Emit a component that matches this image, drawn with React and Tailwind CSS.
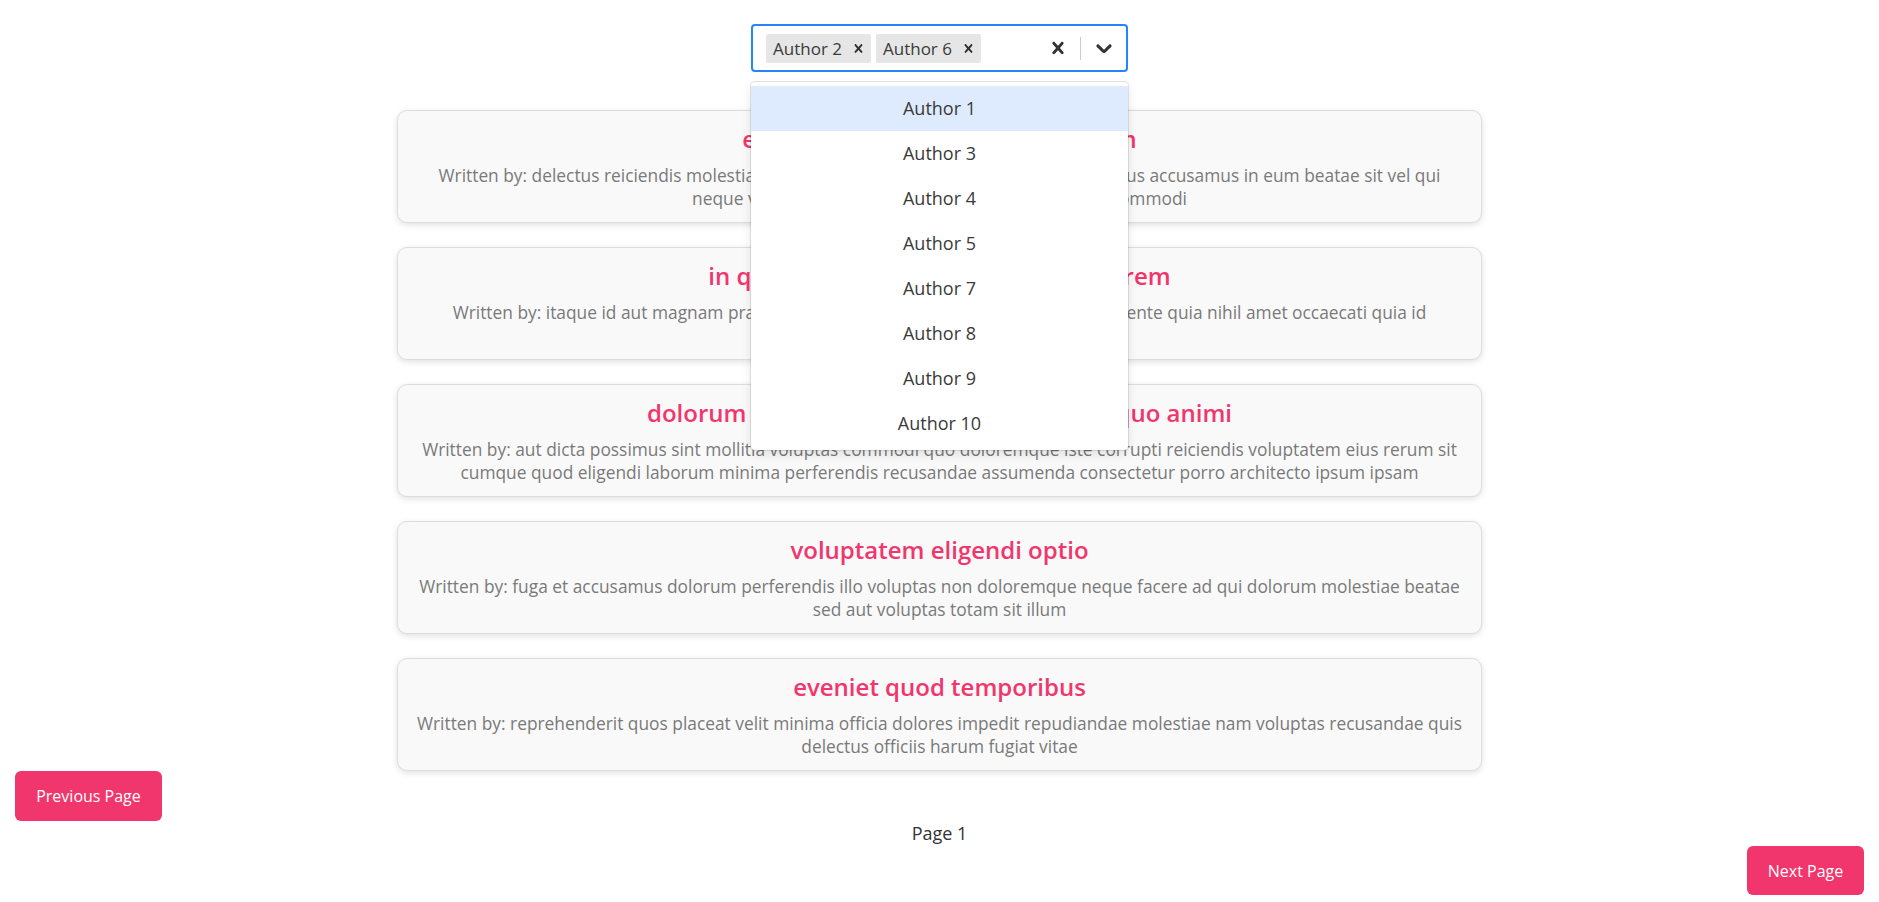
import React from "react";

const PINK = "#f1366d";

const CrossIcon = ({ size = 20 }) => (
  <svg width={size} height={size} viewBox="0 0 20 20" fill="currentColor" aria-hidden="true">
    <path d="M14.348 14.849c-0.469 0.469-1.229 0.469-1.697 0l-2.651-3.030-2.651 3.029c-0.469 0.469-1.229 0.469-1.697 0-0.469-0.469-0.469-1.229 0-1.697l2.758-3.15-2.759-3.152c-0.469-0.469-0.469-1.228 0-1.697s1.228-0.469 1.697 0l2.652 3.031 2.651-3.031c0.469-0.469 1.228-0.469 1.697 0s0.469 1.229 0 1.697l-2.758 3.152 2.758 3.15c0.469 0.469 0.469 1.229 0 1.698z" />
  </svg>
);

const ChevronIcon = ({ size = 20 }) => (
  <svg width={size} height={size} viewBox="0 0 20 20" fill="currentColor" aria-hidden="true">
    <path d="M4.516 7.548c0.436-0.446 1.043-0.481 1.576 0l3.908 3.747 3.908-3.747c0.533-0.481 1.141-0.446 1.574 0 0.436 0.445 0.408 1.197 0 1.615-0.406 0.418-4.695 4.502-4.695 4.502-0.217 0.223-0.502 0.335-0.787 0.335s-0.57-0.112-0.789-0.335c0 0-4.287-4.084-4.695-4.502s-0.436-1.17 0-1.615z" />
  </svg>
);

const posts = [
  {
    title: "et ea vero quia laudantium autem",
    body: "Written by: delectus reiciendis molestiae occaecati non minima eveniet qui voluptatibus accusamus in eum beatae sit vel qui\nneque voluptates ut commodi qui incidunt ut animi commodi",
  },
  {
    title: "in quibusdam tempore odit est dolorem",
    body: "Written by: itaque id aut magnam praesentium quia et ea odit et ea voluptas et sapiente quia nihil amet occaecati quia id\nvoluptatem incidunt ea est distinctio odio",
  },
  {
    title: "dolorum ut in voluptas mollitia et saepe quo animi",
    body: "Written by: aut dicta possimus sint mollitia voluptas commodi quo doloremque iste corrupti reiciendis voluptatem eius rerum sit\ncumque quod eligendi laborum minima perferendis recusandae assumenda consectetur porro architecto ipsum ipsam",
  },
  {
    title: "voluptatem eligendi optio",
    body: "Written by: fuga et accusamus dolorum perferendis illo voluptas non doloremque neque facere ad qui dolorum molestiae beatae\nsed aut voluptas totam sit illum",
  },
  {
    title: "eveniet quod temporibus",
    body: "Written by: reprehenderit quos placeat velit minima officia dolores impedit repudiandae molestiae nam voluptas recusandae quis\ndelectus officiis harum fugiat vitae",
  },
];

const options = ["Author 1", "Author 3", "Author 4", "Author 5", "Author 7", "Author 8", "Author 9", "Author 10"];

function Tag({ label }) {
  return (
    <div className="h-[29px] bg-[#e6e6e6] rounded-[2px] flex items-center text-[#333]">
      <span className="pl-[7px] pr-[4px] text-[17px] leading-none text-[#3a3a3a]">{label}</span>
      <span className="w-[25px] h-full flex items-center justify-center text-[#333]">
        <CrossIcon size={17} />
      </span>
    </div>
  );
}

export default function App() {
  return (
    <div
      className="min-h-[902px] bg-white flex flex-col items-center pt-6"
      style={{ fontFamily: '"Open Sans", "Noto Sans", sans-serif' }}
    >
      <div className="relative z-10 w-[377px]">
        <div className="h-[48px] border-2 border-[#2684ff] rounded-[4px] bg-white flex items-center">
          <div className="flex-1 flex items-center gap-[5px] pl-[13px]">
            <Tag label="Author 2" />
            <Tag label="Author 6" />
          </div>
          <div className="w-[45px] h-full flex items-center justify-center text-[#333]">
            <CrossIcon size={24} />
          </div>
          <div className="w-px h-[23px] bg-[#ccc]" />
          <div className="w-[45px] h-full flex items-center justify-center text-[#333]">
            <ChevronIcon size={26} />
          </div>
        </div>
        <div className="absolute left-0 top-[58px] w-full bg-white rounded-[4px] py-1 shadow-[0_0_0_1px_rgba(0,0,0,0.1),0_4px_11px_rgba(0,0,0,0.1)]">
          {options.map((o, i) => (
            <div
              key={o}
              className={
                i === 0
                  ? "h-[45px] flex items-center justify-center text-[18px] text-[#3a3a3a] bg-[#deebff]"
                  : "h-[45px] flex items-center justify-center text-[18px] text-[#3a3a3a]"
              }
            >
              {o}
            </div>
          ))}
        </div>
      </div>

      <div className="mt-[38px] flex flex-col gap-[24px]">
        {posts.map((p) => (
          <div
            key={p.title}
            className="w-[1085px] h-[113px] bg-[#f9f9f9] border border-[#dddddd] rounded-[10px] shadow-[0_2px_6px_rgba(0,0,0,0.12)] pt-[13px] px-[12px] text-center"
          >
            <h2 className="text-[24px] leading-[29px] font-semibold" style={{ color: PINK }}>
              {p.title}
            </h2>
            <p className="mt-[11px] text-[17.35px] leading-[23px] text-[#7a7a7a] whitespace-pre-line">{p.body}</p>
          </div>
        ))}
      </div>

      <div className="w-full h-[124px] px-[15px] grid grid-cols-[1fr_auto_1fr]">
        <button
          className="self-start justify-self-start h-[50px] w-[147px] rounded-[6px] text-white text-[16px]"
          style={{ backgroundColor: PINK }}
        >
          Previous Page
        </button>
        <div className="self-center text-[18px] text-[#333]">Page 1</div>
        <button
          className="self-end justify-self-end h-[49px] w-[117px] rounded-[6px] text-white text-[16px]"
          style={{ backgroundColor: PINK }}
        >
          Next Page
        </button>
      </div>
    </div>
  );
}
